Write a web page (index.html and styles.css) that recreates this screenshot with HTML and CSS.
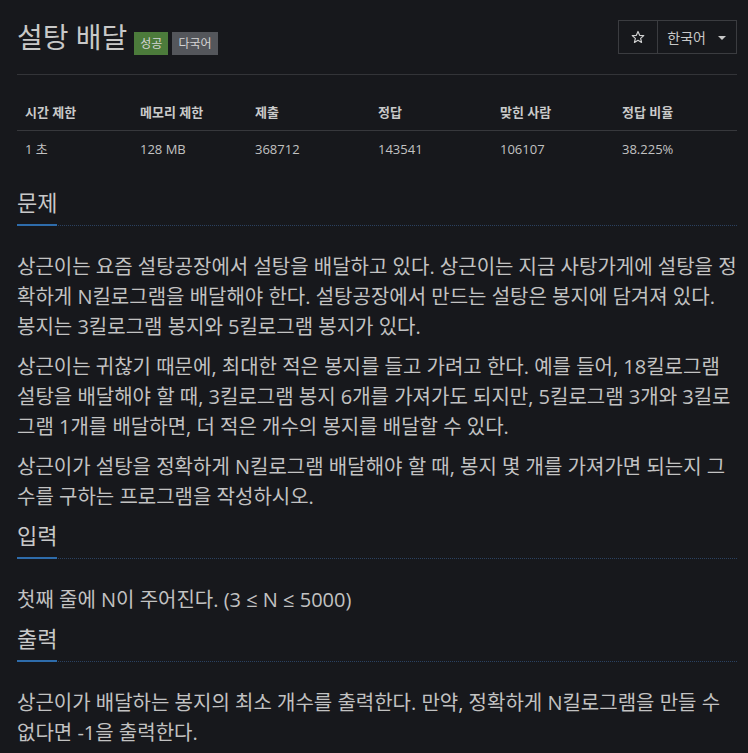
FILE: index.html
```html
<!DOCTYPE html>
<html lang="ko">
<head>
  <meta charset="UTF-8">
  <meta name="viewport" content="width=device-width, initial-scale=1.0">
  <title>설탕 배달</title>
  <link rel="stylesheet" href="styles.css">
</head>
<body>
  <div class="container">
    <div class="page-header">
      <h1>
        <span class="title">설탕 배달</span>
        <span class="label label-success">성공</span>
        <span class="label label-default">다국어</span>
      </h1>
      <div class="btn-group">
        <button class="btn btn-star">
          <svg width="14" height="14" viewBox="0 0 24 24"><path d="M12 2.5l2.8 6.6 7.1.6-5.4 4.7 1.6 7-6.1-3.7-6.1 3.7 1.6-7-5.4-4.7 7.1-.6z" fill="none" stroke="#d0d0d0" stroke-width="2" stroke-linejoin="round"/></svg>
        </button>
        <button class="btn btn-lang">한국어 <span class="caret"></span></button>
      </div>
    </div>

    <table class="info">
      <thead>
        <tr>
          <th>시간 제한</th>
          <th>메모리 제한</th>
          <th>제출</th>
          <th>정답</th>
          <th>맞힌 사람</th>
          <th>정답 비율</th>
        </tr>
      </thead>
      <tbody>
        <tr>
          <td>1 초</td>
          <td>128 MB</td>
          <td>368712</td>
          <td>143541</td>
          <td>106107</td>
          <td>38.225%</td>
        </tr>
      </tbody>
    </table>

    <section class="problem-section">
      <div class="headline"><h2>문제</h2></div>
      <div class="problem-text">
        <p>상근이는 요즘 설탕공장에서 설탕을 배달하고 있다. 상근이는 지금 사탕가게에 설탕을 정확하게 N킬로그램을 배달해야 한다. 설탕공장에서 만드는 설탕은 봉지에 담겨져 있다. 봉지는 3킬로그램 봉지와 5킬로그램 봉지가 있다.</p>
        <p>상근이는 귀찮기 때문에, 최대한 적은 봉지를 들고 가려고 한다. 예를 들어, 18킬로그램 설탕을 배달해야 할 때, 3킬로그램 봉지 6개를 가져가도 되지만, 5킬로그램 3개와 3킬로그램 1개를 배달하면, 더 적은 개수의 봉지를 배달할 수 있다.</p>
        <p>상근이가 설탕을 정확하게 N킬로그램 배달해야 할 때, 봉지 몇 개를 가져가면 되는지 그 수를 구하는 프로그램을 작성하시오.</p>
      </div>
    </section>

    <section class="problem-section">
      <div class="headline"><h2>입력</h2></div>
      <div class="problem-text">
        <p>첫째 줄에 N이 주어진다. (3 ≤ N ≤ 5000)</p>
      </div>
    </section>

    <section class="problem-section">
      <div class="headline"><h2>출력</h2></div>
      <div class="problem-text">
        <p>상근이가 배달하는 봉지의 최소 개수를 출력한다. 만약, 정확하게 N킬로그램을 만들 수 없다면 -1을 출력한다.</p>
      </div>
    </section>
  </div>
</body>
</html>
```

FILE: styles.css
```css
body {
  margin: 0;
  background-color: #17181c;
  color: #c2c2c2;
  font-family: "Open Sans", "Noto Sans CJK KR", sans-serif;
  font-size: 14px;
}

.container {
  padding: 0 11px 0 17px;
}

.page-header {
  display: flex;
  justify-content: space-between;
  align-items: flex-start;
  padding-top: 20px;
  padding-bottom: 20px;
  border-bottom: 1px solid #333438;
}

.page-header h1 {
  margin: 0;
  display: flex;
  align-items: center;
  font-weight: normal;
  height: 34px;
  line-height: 34px;
}

.title {
  font-size: 28px;
  color: #c8c8c8;
  margin-right: 7px;
}

.label {
  font-size: 12px;
  color: #d4d4d4;
  padding: 3px 6px;
  margin-right: 4px;
  margin-top: 13px;
  line-height: 17px;
}

.label-success {
  background-color: #4c7b3b;
}

.label-default {
  background-color: #54565b;
}

/* star + language dropdown */
.btn-group {
  display: flex;
  border: 1px solid #3b3c40;
  height: 32px;
}

.btn {
  background: transparent;
  border: none;
  color: #c8c8c8;
  font-family: inherit;
  font-size: 14px;
  display: flex;
  align-items: center;
}

.btn-star {
  width: 39px;
  justify-content: center;
  border-right: 1px solid #3b3c40;
}

.btn-lang {
  padding: 0 10px 0 9px;
  gap: 12px;
}

.caret {
  width: 0;
  height: 0;
  border-left: 4px solid transparent;
  border-right: 4px solid transparent;
  border-top: 4px solid #c8c8c8;
  margin-top: 2px;
}

.info {
  width: 100%;
  border-collapse: collapse;
  margin-top: 19px;
  margin-bottom: 22px;
  font-size: 13px;
}

.info th,
.info td {
  text-align: left;
  padding: 8px;
  line-height: 20px;
}

.info th {
  font-weight: bold;
  color: #cacaca;
  border-bottom: 1px solid #37383c;
}

.info th:nth-child(1),
.info th:nth-child(2) { width: 99px; }
.info th:nth-child(3) { width: 107px; }
.info th:nth-child(4),
.info th:nth-child(5) { width: 106px; }

.headline {
  border-bottom: 1px dotted #2b4160;
  margin-bottom: 26px;
}

.headline h2 {
  display: inline-block;
  margin: 0 0 -1px;
  font-size: 22px;
  font-weight: normal;
  line-height: 26px;
  padding-bottom: 9px;
  border-bottom: 2px solid #2e6cab;
  color: #c8c8c8;
}

.problem-text {
  font-size: 20px;
  line-height: 30px;
}

.problem-text p {
  margin: 0 0 10px;
}

.problem-section {
  margin-bottom: 5px;
}
```
